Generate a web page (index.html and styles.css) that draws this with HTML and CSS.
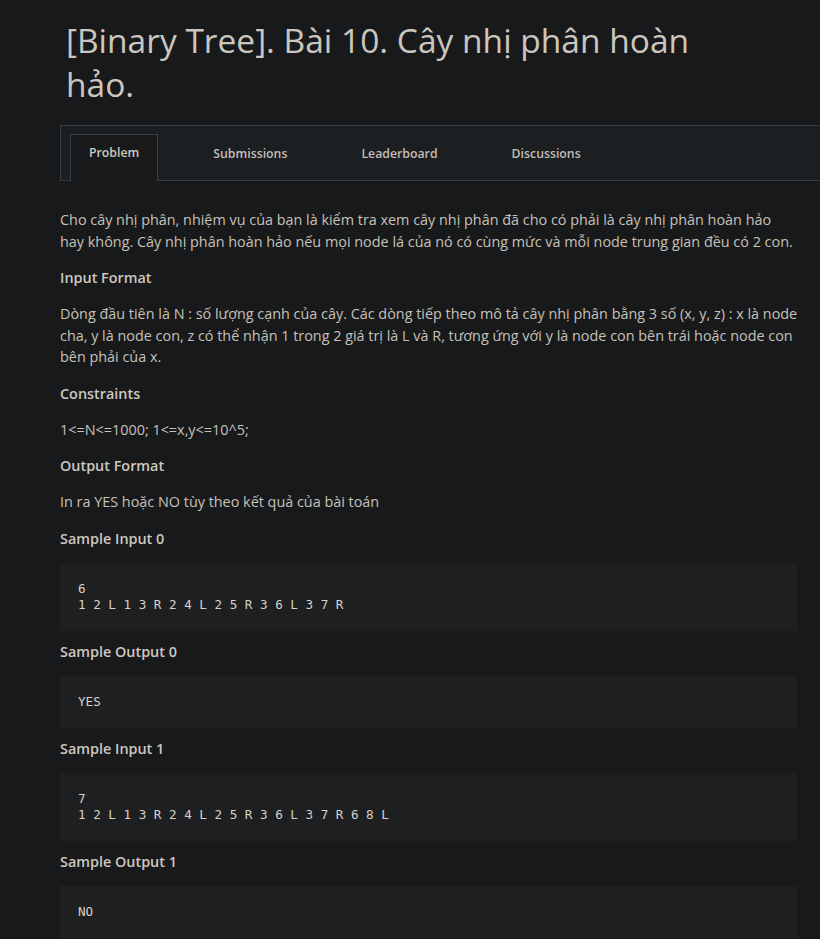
FILE: index.html
```html
<!DOCTYPE html>
<html lang="vi">
<head>
<meta charset="utf-8">
<link rel="stylesheet" href="styles.css">
</head>
<body>
<div class="page">
  <h1 class="title">[Binary Tree]. Bài 10. Cây nhị phân hoàn hảo.</h1>
  <nav class="tabs">
    <div class="tab active">Problem</div>
    <div class="tab">Submissions</div>
    <div class="tab">Leaderboard</div>
    <div class="tab">Discussions</div>
  </nav>
  <div class="content">
    <p class="text">Cho cây nhị phân, nhiệm vụ của bạn là kiểm tra xem cây nhị phân đã cho có phải là cây nhị phân hoàn hảo<br>hay không. Cây nhị phân hoàn hảo nếu mọi node lá của nó có cùng mức và mỗi node trung gian đều có 2 con.</p>
    <h3 class="head">Input Format</h3>
    <p class="text">Dòng đầu tiên là N : số lượng cạnh của cây. Các dòng tiếp theo mô tả cây nhị phân bằng 3 số (x, y, z) : x là node cha, y là node con, z có thể nhận 1 trong 2 giá trị là L và R, tương ứng với y là node con bên trái hoặc node con bên phải của x.</p>
    <h3 class="head">Constraints</h3>
    <p class="text">1&lt;=N&lt;=1000; 1&lt;=x,y&lt;=10^5;</p>
    <h3 class="head">Output Format</h3>
    <p class="text">In ra YES hoặc NO tùy theo kết quả của bài toán</p>
    <h3 class="head">Sample Input 0</h3>
    <pre class="code">6
1 2 L 1 3 R 2 4 L 2 5 R 3 6 L 3 7 R</pre>
    <h3 class="head">Sample Output 0</h3>
    <pre class="code">YES</pre>
    <h3 class="head">Sample Input 1</h3>
    <pre class="code">7
1 2 L 1 3 R 2 4 L 2 5 R 3 6 L 3 7 R 6 8 L</pre>
    <h3 class="head">Sample Output 1</h3>
    <pre class="code">NO</pre>
  </div>
</div>
</body>
</html>
```

FILE: styles.css
```css
html, body {
  margin: 0;
  padding: 0;
  background: #18191b;
  overflow: hidden;
}
body {
  font-family: "Open Sans", "Liberation Sans", sans-serif;
  color: #c6c1b9;
}
.page {
  padding-left: 60px;
  padding-top: 18px;
}
.title {
  margin: 0 0 0 6px;
  width: 680px;
  font-size: 33.5px;
  font-weight: 400;
  line-height: 44px;
  color: #cbc6bf;
}
.tabs {
  margin-top: 19px;
  margin-right: -40px;
  height: 54px;
  background: #1c1f21;
  border-top: 1px solid #393c3f;
  border-bottom: 1px solid #393c3f;
  border-left: 1px solid #393c3f;
  display: flex;
  align-items: flex-end;
  padding-left: 9px;
  gap: 36px;
}
.tab {
  font-size: 12.3px;
  font-weight: 600;
  color: #c2bdb5;
  padding: 0 18px;
  height: 45px;
  line-height: 36px;
  border: 1px solid transparent;
  border-bottom: none;
  margin-bottom: -1px;
}
.tab.active {
  background: #18191b;
  border-color: #3d4043;
  height: 46px;
  color: #cdc8c0;
}
.content {
  width: 740px;
  padding-top: 28px;
}
.text {
  margin: 0 0 15px;
  font-size: 14.4px;
  line-height: 21.5px;
}
.head {
  margin: 0 0 14px;
  font-size: 14.4px;
  font-weight: 600;
  line-height: 22px;
  color: #cdc8c0;
}
.code {
  margin: -1px 3px 10px 0;
  padding: 18px;
  background: #1e1f21;
  font-family: "DejaVu Sans Mono", "Liberation Mono", monospace;
  font-size: 12.6px;
  line-height: 16px;
  color: #d6d2ca;
}
```
